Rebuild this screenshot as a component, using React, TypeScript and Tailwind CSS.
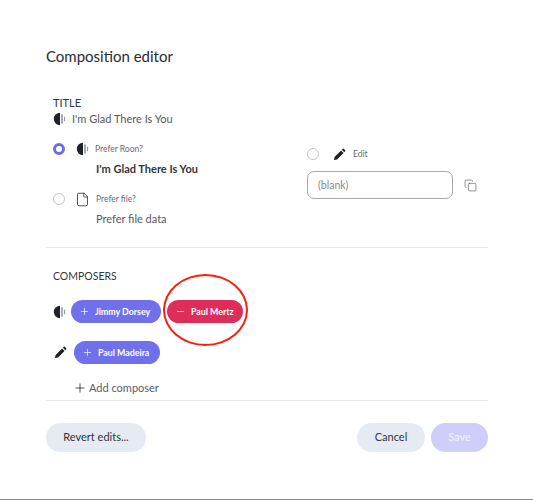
import { Plus, Minus, File, Copy } from 'lucide-react';

function RoonIcon() {
  return (
    <svg width="14" height="14" viewBox="0 0 14 14" fill="none" className="shrink-0">
      <path d="M7 .8a6.2 6.2 0 0 0 0 12.4z" fill="#1f2229" />
      <path d="M9 3v8" stroke="#8a8d93" strokeWidth="1.5" strokeLinecap="round" />
      <path d="M11.6 5.2v3.6" stroke="#8a8d93" strokeWidth="1" strokeLinecap="round" />
    </svg>
  );
}

function PencilIcon() {
  return (
    <svg width="13" height="13" viewBox="0 0 14 14" className="shrink-0">
      <path d="M1 13l.7-3.4 7-7 2.7 2.7-7 7z" fill="#1f2229" />
      <path d="M9.5 1.8l.9-.8a1 1 0 0 1 1.4 0l1.2 1.2a1 1 0 0 1 0 1.4l-.8.9z" fill="#1f2229" />
    </svg>
  );
}

function Radio({ checked }: { checked?: boolean }) {
  if (checked) {
    return <span className="block w-[12px] h-[12px] rounded-full border-[3.5px] border-[#6f6cf0] bg-white shrink-0" />;
  }
  return <span className="block w-[12px] h-[12px] rounded-full border border-[#c4c4c4] bg-white shrink-0" />;
}

function Pill({ name, remove, className }: { name: string; remove?: boolean; className: string }) {
  return (
    <div className={`h-[23px] rounded-full flex items-center text-white text-[8.8px] font-bold ${className}`}>
      {remove ? <Minus size={11} strokeWidth={1.5} /> : <Plus size={11} strokeWidth={1.5} />}
      <span>{name}</span>
    </div>
  );
}

export default function App() {
  return (
    <div className="relative w-[533px] h-[500px] bg-white overflow-hidden text-[#33363c] font-['Lato','Open_Sans',sans-serif] border-b border-[#8a8a8a]">
      <div className="pl-[46px] pr-[45px] pt-[46px]">
        <h1 className="text-[15px] leading-[20px] text-[#2a2c31]">Composition editor</h1>

        {/* Title */}
        <div className="pt-[29px] pl-[7px] h-[182px] border-b border-[#e6e6e6]">
          <div className="text-[11px] leading-[16px]">TITLE</div>
          <div className="flex items-center text-[11px] leading-[16px] text-[#55585e]">
            <RoonIcon />
            <span className="ml-[5px]">I'm Glad There Is You</span>
          </div>
          <div className="flex mt-[14px]">
            <div className="w-[254px]">
              <div className="flex items-center h-[16px]">
                <Radio checked />
                <span className="ml-[11px]"><RoonIcon /></span>
                <span className="ml-[5px] text-[8.5px] text-[#6a6d72]">Prefer Roon?</span>
              </div>
              <div className="pl-[43px] mt-[4px] text-[11px] leading-[16px] font-bold text-[#33363c]">I'm Glad There Is You</div>
              <div className="flex items-center h-[16px] mt-[14px]">
                <Radio />
                <File size={15} strokeWidth={1.3} className="ml-[10px] text-[#2a2c31]" />
                <span className="ml-[6px] text-[8.5px] text-[#6a6d72]">Prefer file?</span>
              </div>
              <div className="pl-[43px] mt-[4px] text-[11px] leading-[16px] text-[#55585e]">Prefer file data</div>
            </div>
            <div className="pt-[5px]">
              <div className="flex items-center h-[16px]">
                <Radio />
                <span className="ml-[14px]"><PencilIcon /></span>
                <span className="ml-[7px] text-[8.5px] text-[#6a6d72]">Edit</span>
              </div>
              <div className="flex items-center mt-[9px]">
                <div className="w-[146px] h-[28px] rounded-[7px] border border-[#a8a8a8] flex items-center pl-[10px] pt-[2px] text-[10.5px] text-[#85888d]">(blank)</div>
                <Copy size={13} strokeWidth={1.2} className="ml-[11px] text-[#55585e]" />
              </div>
            </div>
          </div>
        </div>

        {/* Composers */}
        <div className="pt-[21px] pl-[7px] h-[153px] border-b border-[#e6e6e6]">
          <div className="text-[10.5px] leading-[14px]">COMPOSERS</div>
          <div className="flex items-center mt-[17px]">
            <RoonIcon />
            <Pill name="Jimmy Dorsey" className="ml-[4px] w-[90px] pl-[8px] gap-[5px] bg-[#7170ec]" />
            <Pill name="Paul Mertz" remove className="ml-[6px] w-[76px] pl-[8px] gap-[5px] bg-[#df2c58]" />
          </div>
          <div className="flex items-center mt-[18px]">
            <span className="ml-[1px]"><PencilIcon /></span>
            <Pill name="Paul Madeira" className="ml-[7px] w-[86px] pl-[8px] gap-[5px] bg-[#7170ec]" />
          </div>
          <div className="flex items-center ml-[20px] mt-[16px] text-[11px] leading-[16px] text-[#5a5d63]">
            <Plus size={14} strokeWidth={1.5} className="text-[#33363c]" />
            <span className="ml-[2px]">Add composer</span>
          </div>
        </div>

        {/* Footer */}
        <div className="flex items-center justify-between mt-[22px] text-[11px]">
          <button className="w-[100px] h-[29px] rounded-full bg-[#e6eaf3] text-[#33363c]">Revert edits...</button>
          <div className="flex gap-[6px]">
            <button className="w-[68px] h-[29px] rounded-full bg-[#e6eaf3] text-[#33363c]">Cancel</button>
            <button className="w-[57px] h-[29px] rounded-full bg-[#cfcefa] text-[#f1f1fd]">Save</button>
          </div>
        </div>
      </div>

      {/* Red annotation circled over the page */}
      <div className="absolute left-[163px] top-[274px] w-[85px] h-[72px] rounded-[50%] border-2 border-[#f5200f]" />
    </div>
  );
}
